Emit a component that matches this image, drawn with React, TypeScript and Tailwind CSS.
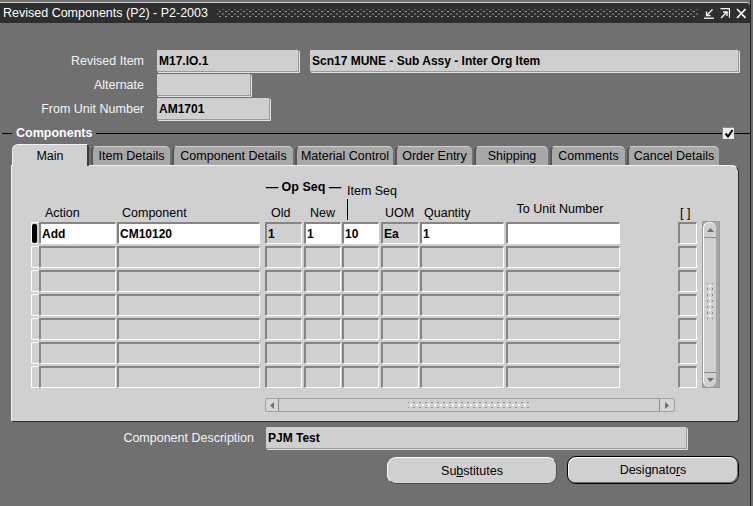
import React from "react";

const SANS = "[font-family:'Liberation_Sans',Arial,sans-serif]";

type Col = { cls: string; ro?: boolean };

const COLS: Col[] = [
  { cls: "w-[77px]" },
  { cls: "w-[143px] ml-[1px]" },
  { cls: "w-[37px] ml-[5px]", ro: true },
  { cls: "w-[37px] ml-[2px]" },
  { cls: "w-[37px] ml-[1px]" },
  { cls: "w-[38px] ml-[2px]", ro: true },
  { cls: "w-[84px] ml-[1px]" },
  { cls: "w-[114px] ml-[2px]" },
  { cls: "w-[19px] ml-[58px]", ro: true },
];

const FIRST_ROW = ["Add", "CM10120", "1", "1", "10", "Ea", "1", "", ""];

const TABS = [
  { label: "Item Details", cls: "w-[79px]" },
  { label: "Component Details", cls: "w-[121px]" },
  { label: "Material Control", cls: "w-[98px]" },
  { label: "Order Entry", cls: "w-[77px]" },
  { label: "Shipping", cls: "w-[74px]" },
  { label: "Comments", cls: "w-[75px]" },
  { label: "Cancel Details", cls: "w-[92px]" },
];

function TopField({ cls, value }: { cls: string; value?: string }) {
  return (
    <div
      className={`${cls} h-[22px] bg-[#cfcfcf] border-b border-r border-[#9a9a9a] shadow-[1px_1px_0_#e2e2e2] rounded-[1px] pl-[2px] flex items-center font-bold text-[12px] text-black whitespace-nowrap overflow-hidden`}
    >
      {value}
    </div>
  );
}

function FormRow({ label, children }: { label: string; children: React.ReactNode }) {
  return (
    <div className="flex items-center h-[22px]">
      <span className="w-[145px] text-right text-[12.5px] text-[#f4f4f4] pr-[1px]">{label}</span>
      <div className="ml-[12px] flex items-center">{children}</div>
    </div>
  );
}

function TitleIcons() {
  return (
    <div className="flex items-center gap-[6px]">
      <svg width="10" height="11" viewBox="0 0 10 11" fill="none" stroke="white" strokeWidth="1.3">
        <path d="M8.5 1.5L2.5 7.5" />
        <path d="M2.5 3.5v4h4" />
        <path d="M0 10.2h10" />
      </svg>
      <svg width="10" height="11" viewBox="0 0 10 11" fill="none" stroke="white" strokeWidth="1.3">
        <path d="M0.5 0.7h9v9" />
        <path d="M1 10L7 4" />
        <path d="M3 4h4v4" />
      </svg>
      <svg width="10" height="11" viewBox="0 0 10 11" fill="none" stroke="white" strokeWidth="1.6">
        <path d="M1 1l8.5 9M9.5 1L1 10" />
      </svg>
    </div>
  );
}

function Cell({ col, value, first }: { col: Col; value: string; first: boolean }) {
  const bg = first && !col.ro ? "bg-white" : "bg-[#d0d0d0]";
  return (
    <div
      className={`${col.cls} ${bg} shrink-0 h-[22px] border-t-2 border-l-2 border-t-[#858585] border-l-[#858585] border-b border-r border-b-white border-r-white rounded-[1px] pl-[1px] flex items-center font-bold text-[12px] text-black`}
    >
      {value}
    </div>
  );
}

function VScroll() {
  return (
    <div className="ml-[5px] -mt-[1px] w-[18px] h-[167px] bg-[#a6a6a6] border border-[#9a9a9a] flex">
      <div className="w-[13px] h-full bg-[#d0d0d0] border-l border-t border-white rounded-t-[6px] rounded-b-[6px] flex flex-col">
        <div className="h-[15px] border-b border-[#8a8a8a] flex items-center justify-center">
          <svg width="7" height="4" viewBox="0 0 7 4">
            <path d="M0 4L3.5 0L7 4z" fill="#707070" />
          </svg>
        </div>
        <div className="flex-1 flex items-center justify-center">
          <div className="w-[6px] h-[36px] mt-[-8px] [background:radial-gradient(circle,#f8f8f8_0.7px,transparent_1.1px)_0_0/6px_6px,radial-gradient(circle,#8a8a8a_0.7px,transparent_1.1px)_3px_3px/6px_6px]" />
        </div>
        <div className="h-[15px] border-t border-[#8a8a8a] flex items-center justify-center">
          <svg width="7" height="4" viewBox="0 0 7 4">
            <path d="M0 0L3.5 4L7 0z" fill="#707070" />
          </svg>
        </div>
      </div>
    </div>
  );
}

function HScroll() {
  return (
    <div className="ml-[234px] mt-[10px] w-[410px] h-[14px] bg-[#d0d0d0] border border-[#a2a2a2] rounded-[2px] flex">
      <div className="w-[13px] h-full border-r border-[#8a8a8a] rounded-l-[6px] bg-[#d6d6d6] flex items-center justify-center">
        <svg width="4" height="7" viewBox="0 0 4 7">
          <path d="M4 0L0 3.5L4 7z" fill="#707070" />
        </svg>
      </div>
      <div className="flex-1 flex items-center justify-center">
        <div className="w-[122px] h-[6px] [background:radial-gradient(circle,#f8f8f8_0.7px,transparent_1.1px)_0_0/6px_6px,radial-gradient(circle,#8a8a8a_0.7px,transparent_1.1px)_3px_3px/6px_6px]" />
      </div>
      <div className="w-[15px] h-full border-l border-[#8a8a8a] rounded-r-[6px] bg-[#d6d6d6] flex items-center justify-center">
        <svg width="4" height="7" viewBox="0 0 4 7">
          <path d="M0 0L4 3.5L0 7z" fill="#707070" />
        </svg>
      </div>
    </div>
  );
}

export default function App() {
  return (
    <div className={`w-[753px] h-[506px] bg-[#707070] overflow-hidden ${SANS} text-[12.5px] leading-[14px]`}>
      <div className="w-[751px] h-full border-r border-[#222] flex flex-col">
        {/* title bar */}
        <div className="pt-[2px]">
          <div className="h-[21px] border-t border-[#cfcfcf] bg-[#2e2e2e] rounded-tr-[4px] flex items-center pl-[3px] pr-[4px]">
            <span className="text-white whitespace-nowrap">Revised Components (P2) - P2-2003</span>
            <div className="flex-1 h-[8px] ml-[9px] mr-[5px] [background:radial-gradient(circle,#9a9a9a_0.7px,transparent_1.1px)_0_0/6px_5px,radial-gradient(circle,#9a9a9a_0.7px,transparent_1.1px)_3px_2.5px/6px_5px]" />
            <TitleIcons />
          </div>
        </div>

        {/* header fields */}
        <div className="mt-[27px] flex flex-col gap-[2px]">
          <FormRow label="Revised Item">
            <TopField cls="w-[142px]" value="M17.IO.1" />
            <TopField cls="w-[429px] ml-[11px]" value="Scn17 MUNE - Sub Assy - Inter Org Item" />
          </FormRow>
          <FormRow label="Alternate">
            <TopField cls="w-[94px]" />
          </FormRow>
          <FormRow label="From Unit Number">
            <TopField cls="w-[113px]" value="AM1701" />
          </FormRow>
        </div>

        {/* components section */}
        <div className="mt-[6px] h-[14px] flex items-center">
          <div className="ml-[2px] w-[10px] h-px bg-black" />
          <span className="px-[4px] font-bold text-white">Components</span>
          <div className="flex-1 h-px bg-black" />
          <div className="w-[12px] h-[12px] bg-[#ececec] border-t border-l border-[#8a8a8a] flex items-center justify-center">
            <svg width="10" height="9" viewBox="0 0 10 9" fill="none" stroke="black" strokeWidth="2">
              <path d="M1.5 4.5l2.5 3L8.5 1" />
            </svg>
          </div>
          <div className="w-[16px] h-px bg-black" />
        </div>

        <div className="mt-[4px] ml-[12px] h-[21px] flex items-end relative z-10">
          <div className="w-[77px] h-[22px] mb-[-1px] bg-[#d0d0d0] border-t border-l border-[#f2f2f2] border-r-2 border-r-[#3c3c3c] rounded-tl-[6px] rounded-tr-[3px] flex items-center justify-center text-black">
            Main
          </div>
          {TABS.map((t) => (
            <div
              key={t.label}
              className={`${t.cls} ml-[2px] h-[19px] bg-[#a8a8a8] border-t border-t-[#cfcfcf] border-l-2 border-l-[#555] rounded-t-[5px] flex items-center justify-center text-black whitespace-nowrap`}
            >
              {t.label}
            </div>
          ))}
        </div>

        {/* tab panel */}
        <div className="ml-[11px] w-[728px] h-[257px] bg-[#d0d0d0] border-l border-t border-[#f4f4f4] border-r border-b border-r-[#2a2a2a] border-b-[#2a2a2a] rounded-tr-[7px] rounded-br-[3px] rounded-bl-[2px] pl-[19px] text-black">
          <div className="h-[56px] pb-[2px] flex items-end">
            <div className="w-[8px]" />
            <div className="w-[78px] pl-[6px]">Action</div>
            <div className="w-[148px] pl-[5px]">Component</div>
            <div className="w-[77px] flex flex-col">
              <div className="text-center font-bold whitespace-nowrap">— Op Seq —</div>
              <div className="mt-[12px] flex">
                <div className="w-[39px] pl-[6px]">Old</div>
                <div className="w-[38px] pl-[6px]">New</div>
              </div>
            </div>
            <div className="w-[39px] flex flex-col">
              <div className="pl-[5px] whitespace-nowrap">Item Seq</div>
              <div className="ml-[5px] mt-[1px] w-px h-[21px] bg-black" />
            </div>
            <div className="w-[39px] pl-[4px]">UOM</div>
            <div className="w-[86px] pl-[4px]">Quantity</div>
            <div className="w-[114px] pr-[6px] mb-[4px] text-center whitespace-nowrap">To Unit Number</div>
            <div className="ml-[58px] w-[19px] pl-[2px]">[ ]</div>
          </div>

          <div className="flex">
            <div className="flex flex-col gap-[2px]">
              {Array.from({ length: 7 }).map((_, r) => (
                <div key={r} className="flex">
                  <div className="w-[8px] h-[22px] border-l border-t border-b border-white rounded-l-[2px] flex items-center">
                    {r === 0 && <div className="w-[5px] h-[19px] bg-black rounded-[2px]" />}
                  </div>
                  {COLS.map((c, i) => (
                    <Cell key={i} col={c} value={r === 0 ? FIRST_ROW[i] : ""} first={r === 0} />
                  ))}
                </div>
              ))}
            </div>
            <VScroll />
          </div>

          <HScroll />
        </div>

        {/* description */}
        <div className="mt-[5px] flex items-center h-[22px]">
          <span className="w-[255px] text-right pr-[1px] text-[#f4f4f4]">Component Description</span>
          <TopField cls="ml-[11px] w-[421px]" value="PJM Test" />
        </div>

        {/* buttons */}
        <div className="mt-[7px] flex items-start">
          <button className="ml-[387px] mt-[1px] w-[170px] h-[27px] bg-[#d0d0d0] rounded-[9px] border-t border-l border-white border-r border-b border-r-[#505050] border-b-[#505050] text-black">
            Su<span className="underline">b</span>stitutes
          </button>
          <button className="ml-[10px] w-[172px] h-[28px] bg-[#d0d0d0] rounded-[9px] border border-black shadow-[inset_1px_1px_0_#ffffff,inset_-1px_-1px_0_#6a6a6a] text-black">
            Designato<span className="underline">r</span>s
          </button>
        </div>
      </div>
    </div>
  );
}
